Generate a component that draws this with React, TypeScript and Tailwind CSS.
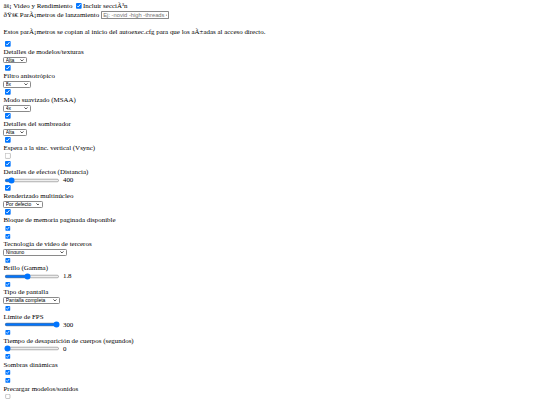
import React from "react";

const cb = "mt-[3px] mr-[3px] mb-[3px] ml-[4px] w-[13px] h-[13px] shrink-0";

function Check({ checked = true }: { checked?: boolean }) {
  return <input type="checkbox" defaultChecked={checked} className={cb} />;
}

function Sel({ value, opts, w }: { value: string; opts: string[]; w: string }) {
  return (
    <span className={"relative inline-flex h-[16px] " + w}>
      <select
        defaultValue={value}
        className="appearance-none w-full h-[16px] pt-0 pb-[1px] border border-[#8a8a8a] rounded-[3px] bg-white text-[11.5px] leading-[13px] font-['Liberation_Sans',Arial,sans-serif] text-black pl-[3px] pr-[16px]"
      >
        {opts.map((o) => (
          <option key={o}>{o}</option>
        ))}
      </select>
      <svg
        className="absolute right-[7px] top-[5px] pointer-events-none"
        width="9"
        height="6"
        viewBox="0 0 9 6"
        fill="none"
      >
        <path d="M1 1 L4.5 4.5 L8 1" stroke="#000" strokeWidth="1.6" />
      </svg>
    </span>
  );
}

function Range({ v, min, max, step, label }: { v: number; min: number; max: number; step?: number; label: string }) {
  return (
    <>
      <input
        type="range"
        min={min}
        max={max}
        step={step ?? 1}
        defaultValue={v}
        className="mx-[2px] w-[129px] h-[16px]"
      />
      <span className="ml-[4px]">{label}</span>
    </>
  );
}

const row = "h-[18.5px] flex items-center";

function Item({ label, children }: { label: string; children: React.ReactNode }) {
  return (
    <div>
      <div className={row}>
        <Check />
      </div>
      <label className={row + " whitespace-nowrap"}>{label}</label>
      <div className={row}>{children}</div>
    </div>
  );
}

export default function App() {
  return (
    <div className="bg-white h-[405px] w-[540px] overflow-hidden">
      <div className="[zoom:0.434] px-[8px] pt-[5px] font-['Liberation_Serif','Times_New_Roman',serif] text-[16px] leading-[18.4px] text-black">
        <div className="h-[19px] flex items-center whitespace-nowrap">
          <span>âš¡ Video y Rendimiento&nbsp;</span>
          <Check />
          <span>Incluir secciÃ³n</span>
        </div>
        <div className="h-[22px] flex items-center whitespace-nowrap">
          <span>ðŸš€ ParÃ¡metros de lanzamiento&nbsp;</span>
          <input
            type="text"
            placeholder="Ej: -novid -high -threads 4"
            className="h-[17px] w-[157px] border border-[#8a8a8a] rounded-[2px] px-[3px] text-[13.333px] leading-[15px] font-['Liberation_Sans',Arial,sans-serif] bg-white placeholder:text-[#757575]"
          />
        </div>
        <p className="mt-[18.5px] mb-[9.3px] whitespace-nowrap">
          Estos parÃ¡metros se copian al inicio del autoexec.cfg para que los aÃ±adas al acceso directo.
        </p>
        <Item label="Detalles de modelos/texturas">
          <Sel value="Alta" opts={["Baja", "Alta"]} w="w-[55px]" />
        </Item>
        <Item label="Filtro anisotrópico">
          <Sel value="8x" opts={["2x", "4x", "8x", "16x"]} w="w-[64px]" />
        </Item>
        <Item label="Modo suavizado (MSAA)">
          <Sel value="4x" opts={["2x", "4x", "8x"]} w="w-[64px]" />
        </Item>
        <Item label="Detalles del sombreador">
          <Sel value="Alta" opts={["Baja", "Alta"]} w="w-[55px]" />
        </Item>
        <Item label="Espera a la sinc. vertical (Vsync)">
          <Check checked={false} />
        </Item>
        <Item label="Detalles de efectos (Distancia)">
          <Range v={400} min={0} max={5000} label="400" />
        </Item>
        <Item label="Renderizado multinúcleo">
          <Sel value="Por defecto" opts={["Por defecto", "Activado"]} w="w-[90px]" />
        </Item>
        <Item label="Bloque de memoria paginada disponible">
          <Check />
        </Item>
        <Item label="Tecnología de video de terceros">
          <Sel value="Ninguno" opts={["Ninguno"]} w="w-[146px]" />
        </Item>
        <Item label="Brillo (Gamma)">
          <Range v={1.8} min={1} max={3} step={0.1} label="1.8" />
        </Item>
        <Item label="Tipo de pantalla">
          <Sel value="Pantalla completa" opts={["Pantalla completa", "Ventana"]} w="w-[131px]" />
        </Item>
        <Item label="Límite de FPS">
          <Range v={300} min={0} max={300} label="300" />
        </Item>
        <Item label="Tiempo de desaparición de cuerpos (segundos)">
          <Range v={0} min={0} max={60} label="0" />
        </Item>
        <Item label="Sombras dinámicas">
          <Check />
        </Item>
        <Item label="Precargar modelos/sonidos">
          <Check checked={false} />
        </Item>
      </div>
    </div>
  );
}
